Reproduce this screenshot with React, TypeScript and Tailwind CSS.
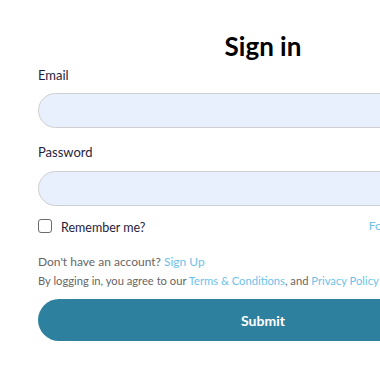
export default function App() {
  return (
    <div className="w-[380px] h-[380px] overflow-hidden bg-white font-['Lato',sans-serif]">
      <div className="w-[450px] ml-[38px] pt-[30px]">
        {/* Title */}
        <h1 className="text-center text-[26px] leading-[32px] font-bold text-black">Sign in</h1>

        {/* Email */}
        <label className="block mt-[4px] text-[13px] leading-[18px] text-[#1f1d3d]">Email</label>
        <input
          type="email"
          className="block mt-[9px] w-full h-[35px] rounded-full bg-[#e8f0fe] border border-[#cfcfcf] px-4 outline-none"
        />

        {/* Password */}
        <label className="block mt-[15px] text-[13px] leading-[18px] text-[#1f1d3d]">Password</label>
        <input
          type="password"
          className="block mt-[10px] w-full h-[35px] rounded-full bg-[#e8f0fe] border border-[#cfcfcf] px-4 outline-none"
        />

        {/* Remember / forgot */}
        <div className="mt-[13px] flex items-center justify-between h-[14px]">
          <div className="flex items-center">
            <span className="w-[14px] h-[14px] rounded-[3px] border border-[#6b6b6b] bg-white" />
            <span className="ml-[9px] text-[12.5px] leading-[16px] text-[#1f1d3d] mt-[3px]">Remember me?</span>
          </div>
          <a className="text-[12px] leading-[16px] text-[#6cc2ea]">Forgot your password?</a>
        </div>

        <p className="mt-[21px] text-[12px] leading-[16px] text-[#666666]">
          Don't have an account? <a className="text-[#6cc2ea]">Sign Up</a>
        </p>
        <p className="mt-[3px] text-[11.2px] leading-[16px] text-[#666666]">
          By logging in, you agree to our <a className="text-[#6cc2ea]">Terms &amp; Conditions</a>, and{' '}
          <a className="text-[#6cc2ea]">Privacy Policy</a>
        </p>

        <button className="mt-[10px] w-full h-[42px] rounded-full bg-[#2e819e] text-white text-[14px] font-bold">
          Submit
        </button>
      </div>
    </div>
  )
}
